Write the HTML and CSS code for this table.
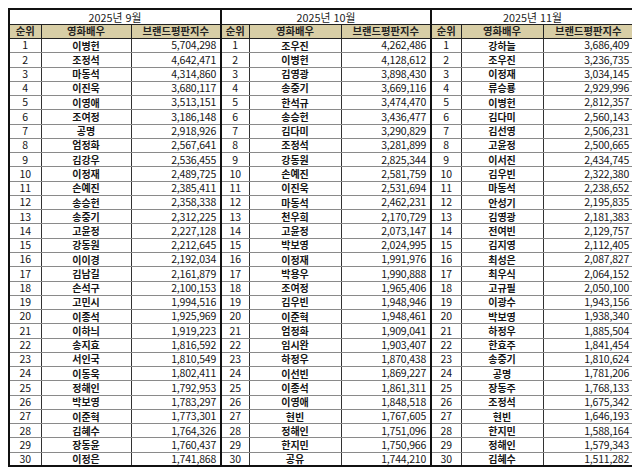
FILE: index.html
```html
<!DOCTYPE html>
<html lang="ko">
<head>
<meta charset="utf-8">
<title>영화배우 브랜드평판지수</title>
<link rel="stylesheet" href="styles.css">
</head>
<body>
<table class="ranking">
<colgroup>
<col class="c-rank1"><col class="c-name1"><col class="c-score1">
<col class="c-rank2"><col class="c-name2"><col class="c-score2">
<col class="c-rank3"><col class="c-name3"><col class="c-score3">
</colgroup>
<thead>
<tr class="title-row"><th colspan="3" class="sec">2025년 9월</th><th colspan="3" class="sec">2025년 10월</th><th colspan="3" class="sec">2025년 11월</th></tr>
<tr class="head-row">
<th class="sec">순위</th><th>영화배우</th><th>브랜드평판지수</th>
<th class="sec">순위</th><th>영화배우</th><th>브랜드평판지수</th>
<th class="sec">순위</th><th>영화배우</th><th>브랜드평판지수</th>
</tr>
</thead>
<tbody>
<tr><td class="rank sec">1</td><td class="name">이병헌</td><td class="score">5,704,298</td><td class="rank sec">1</td><td class="name">조우진</td><td class="score">4,262,486</td><td class="rank sec">1</td><td class="name">강하늘</td><td class="score">3,686,409</td></tr>
<tr><td class="rank sec">2</td><td class="name">조정석</td><td class="score">4,642,471</td><td class="rank sec">2</td><td class="name">이병헌</td><td class="score">4,128,612</td><td class="rank sec">2</td><td class="name">조우진</td><td class="score">3,236,735</td></tr>
<tr><td class="rank sec">3</td><td class="name">마동석</td><td class="score">4,314,860</td><td class="rank sec">3</td><td class="name">김영광</td><td class="score">3,898,430</td><td class="rank sec">3</td><td class="name">이정재</td><td class="score">3,034,145</td></tr>
<tr><td class="rank sec">4</td><td class="name">이진욱</td><td class="score">3,680,117</td><td class="rank sec">4</td><td class="name">송중기</td><td class="score">3,669,116</td><td class="rank sec">4</td><td class="name">류승룡</td><td class="score">2,929,996</td></tr>
<tr><td class="rank sec">5</td><td class="name">이영애</td><td class="score">3,513,151</td><td class="rank sec">5</td><td class="name">한석규</td><td class="score">3,474,470</td><td class="rank sec">5</td><td class="name">이병헌</td><td class="score">2,812,357</td></tr>
<tr><td class="rank sec">6</td><td class="name">조여정</td><td class="score">3,186,148</td><td class="rank sec">6</td><td class="name">송승헌</td><td class="score">3,436,477</td><td class="rank sec">6</td><td class="name">김다미</td><td class="score">2,560,143</td></tr>
<tr><td class="rank sec">7</td><td class="name">공명</td><td class="score">2,918,926</td><td class="rank sec">7</td><td class="name">김다미</td><td class="score">3,290,829</td><td class="rank sec">7</td><td class="name">김선영</td><td class="score">2,506,231</td></tr>
<tr><td class="rank sec">8</td><td class="name">엄정화</td><td class="score">2,567,641</td><td class="rank sec">8</td><td class="name">조정석</td><td class="score">3,281,899</td><td class="rank sec">8</td><td class="name">고윤정</td><td class="score">2,500,665</td></tr>
<tr><td class="rank sec">9</td><td class="name">김강우</td><td class="score">2,536,455</td><td class="rank sec">9</td><td class="name">강동원</td><td class="score">2,825,344</td><td class="rank sec">9</td><td class="name">이서진</td><td class="score">2,434,745</td></tr>
<tr><td class="rank sec">10</td><td class="name">이정재</td><td class="score">2,489,725</td><td class="rank sec">10</td><td class="name">손예진</td><td class="score">2,581,759</td><td class="rank sec">10</td><td class="name">김우빈</td><td class="score">2,322,380</td></tr>
<tr><td class="rank sec">11</td><td class="name">손예진</td><td class="score">2,385,411</td><td class="rank sec">11</td><td class="name">이진욱</td><td class="score">2,531,694</td><td class="rank sec">11</td><td class="name">마동석</td><td class="score">2,238,652</td></tr>
<tr><td class="rank sec">12</td><td class="name">송승헌</td><td class="score">2,358,338</td><td class="rank sec">12</td><td class="name">마동석</td><td class="score">2,462,231</td><td class="rank sec">12</td><td class="name">안성기</td><td class="score">2,195,835</td></tr>
<tr><td class="rank sec">13</td><td class="name">송중기</td><td class="score">2,312,225</td><td class="rank sec">13</td><td class="name">천우희</td><td class="score">2,170,729</td><td class="rank sec">13</td><td class="name">김영광</td><td class="score">2,181,383</td></tr>
<tr><td class="rank sec">14</td><td class="name">고윤정</td><td class="score">2,227,128</td><td class="rank sec">14</td><td class="name">고윤정</td><td class="score">2,073,147</td><td class="rank sec">14</td><td class="name">전여빈</td><td class="score">2,129,757</td></tr>
<tr><td class="rank sec">15</td><td class="name">강동원</td><td class="score">2,212,645</td><td class="rank sec">15</td><td class="name">박보영</td><td class="score">2,024,995</td><td class="rank sec">15</td><td class="name">김지영</td><td class="score">2,112,405</td></tr>
<tr><td class="rank sec">16</td><td class="name">이이경</td><td class="score">2,192,034</td><td class="rank sec">16</td><td class="name">이정재</td><td class="score">1,991,976</td><td class="rank sec">16</td><td class="name">최성은</td><td class="score">2,087,827</td></tr>
<tr><td class="rank sec">17</td><td class="name">김남길</td><td class="score">2,161,879</td><td class="rank sec">17</td><td class="name">박용우</td><td class="score">1,990,888</td><td class="rank sec">17</td><td class="name">최우식</td><td class="score">2,064,152</td></tr>
<tr><td class="rank sec">18</td><td class="name">손석구</td><td class="score">2,100,153</td><td class="rank sec">18</td><td class="name">조여정</td><td class="score">1,965,406</td><td class="rank sec">18</td><td class="name">고규필</td><td class="score">2,050,100</td></tr>
<tr><td class="rank sec">19</td><td class="name">고민시</td><td class="score">1,994,516</td><td class="rank sec">19</td><td class="name">김우빈</td><td class="score">1,948,946</td><td class="rank sec">19</td><td class="name">이광수</td><td class="score">1,943,156</td></tr>
<tr><td class="rank sec">20</td><td class="name">이종석</td><td class="score">1,925,969</td><td class="rank sec">20</td><td class="name">이준혁</td><td class="score">1,948,461</td><td class="rank sec">20</td><td class="name">박보영</td><td class="score">1,938,340</td></tr>
<tr><td class="rank sec">21</td><td class="name">이하늬</td><td class="score">1,919,223</td><td class="rank sec">21</td><td class="name">엄정화</td><td class="score">1,909,041</td><td class="rank sec">21</td><td class="name">하정우</td><td class="score">1,885,504</td></tr>
<tr><td class="rank sec">22</td><td class="name">송지효</td><td class="score">1,816,592</td><td class="rank sec">22</td><td class="name">임시완</td><td class="score">1,903,407</td><td class="rank sec">22</td><td class="name">한효주</td><td class="score">1,841,454</td></tr>
<tr><td class="rank sec">23</td><td class="name">서인국</td><td class="score">1,810,549</td><td class="rank sec">23</td><td class="name">하정우</td><td class="score">1,870,438</td><td class="rank sec">23</td><td class="name">송중기</td><td class="score">1,810,624</td></tr>
<tr><td class="rank sec">24</td><td class="name">이동욱</td><td class="score">1,802,411</td><td class="rank sec">24</td><td class="name">이선빈</td><td class="score">1,869,227</td><td class="rank sec">24</td><td class="name">공명</td><td class="score">1,781,206</td></tr>
<tr><td class="rank sec">25</td><td class="name">정해인</td><td class="score">1,792,953</td><td class="rank sec">25</td><td class="name">이종석</td><td class="score">1,861,311</td><td class="rank sec">25</td><td class="name">장동주</td><td class="score">1,768,133</td></tr>
<tr><td class="rank sec">26</td><td class="name">박보영</td><td class="score">1,783,297</td><td class="rank sec">26</td><td class="name">이영애</td><td class="score">1,848,518</td><td class="rank sec">26</td><td class="name">조정석</td><td class="score">1,675,342</td></tr>
<tr><td class="rank sec">27</td><td class="name">이준혁</td><td class="score">1,773,301</td><td class="rank sec">27</td><td class="name">현빈</td><td class="score">1,767,605</td><td class="rank sec">27</td><td class="name">현빈</td><td class="score">1,646,193</td></tr>
<tr><td class="rank sec">28</td><td class="name">김혜수</td><td class="score">1,764,326</td><td class="rank sec">28</td><td class="name">정해인</td><td class="score">1,751,096</td><td class="rank sec">28</td><td class="name">한지민</td><td class="score">1,588,164</td></tr>
<tr><td class="rank sec">29</td><td class="name">장동윤</td><td class="score">1,760,437</td><td class="rank sec">29</td><td class="name">한지민</td><td class="score">1,750,966</td><td class="rank sec">29</td><td class="name">정해인</td><td class="score">1,579,343</td></tr>
<tr><td class="rank sec">30</td><td class="name">이정은</td><td class="score">1,741,868</td><td class="rank sec">30</td><td class="name">공유</td><td class="score">1,744,210</td><td class="rank sec">30</td><td class="name">김혜수</td><td class="score">1,511,282</td></tr>
</tbody>
</table>
</body>
</html>
```
FILE: styles.css
```css
body {
  margin: 8px;
  background: #ffffff;
  font-family: "Noto Sans CJK KR", "Noto Sans", sans-serif;
  color: #151515;
}

.ranking {
  border-collapse: collapse;
  table-layout: fixed;
  width: 625px;
  border: 2px solid #111111;
}

.c-rank1 { width: 32px; }
.c-name1 { width: 90px; }
.c-score1 { width: 90px; }
.c-rank2 { width: 28px; }
.c-name2 { width: 92px; }
.c-score2 { width: 90px; }
.c-rank3 { width: 30px; }
.c-name3 { width: 82px; }
.c-score3 { width: 91px; }

.ranking th,
.ranking td {
  padding: 0;
  line-height: 1;
  white-space: nowrap;
  overflow: hidden;
  vertical-align: middle;
}

.title-row th {
  height: 14px;
  font-weight: normal;
  font-size: 10.8px;
  text-align: center;
  color: #222222;
  border-bottom: 1px solid #222222;
}

.head-row th {
  height: 13px;
  background: #d8cea6;
  font-weight: bold;
  font-size: 10.3px;
  text-align: center;
  color: #222222;
  border: 1px solid #222222;
}

.ranking tbody tr {
  height: 14.27px;
}

.ranking td {
  border-left: 1px solid #333333;
  border-bottom: 1px solid #8a8a8a;
}

.ranking .sec {
  border-left: 2px solid #111111;
}

.ranking .rank {
  text-align: center;
  font-size: 10.5px;
}

.ranking .name {
  text-align: center;
  font-weight: bold;
  font-size: 10px;
}

.ranking .score {
  text-align: right;
  padding-right: 4px;
  font-size: 10.5px;
  letter-spacing: -0.2px;
}
```
